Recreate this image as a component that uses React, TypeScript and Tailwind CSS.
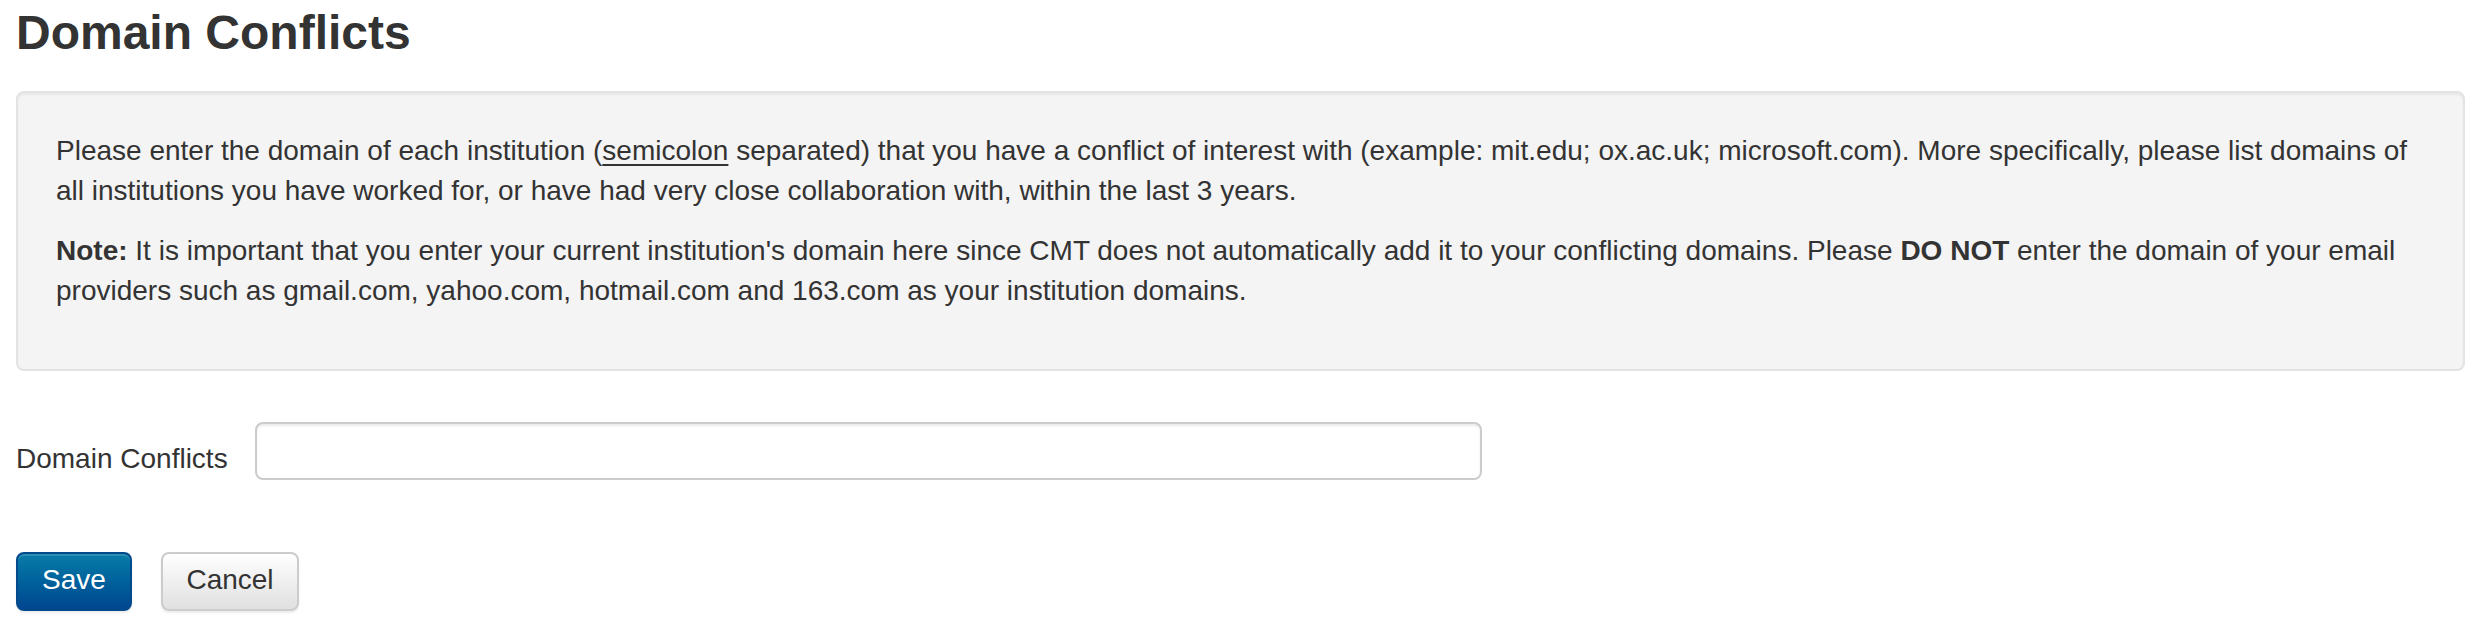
import React from "react";

export default function App() {
  return (
    <div className="min-h-[626px] bg-white pl-4 pr-[10px] font-[family-name:'Liberation_Sans',Arial,Helvetica,sans-serif] text-[#333]">
      <h1 className="pt-[6px] text-[48px] leading-[53px] font-bold text-[#333]">Domain Conflicts</h1>

      <div className="mt-[32px] rounded-[8px] border-2 border-[#e3e3e3] bg-[#f4f4f4] p-[38px] text-[28px] leading-[40px] shadow-[inset_0_2px_2px_rgba(0,0,0,0.05)]">
        <p className="mb-[20px]">
          Please enter the domain of each institution (<span className="underline underline-offset-[4px]">semicolon</span> separated) that you have a conflict of interest with (example: mit.edu; ox.ac.uk; microsoft.com). More specifically, please list domains of all institutions you have worked for, or have had very close collaboration with, within the last 3 years.
        </p>
        <p className="mb-[20px]">
          <strong className="font-bold">Note:</strong> It is important that you enter your current institution's domain here since CMT does not automatically add it to your conflicting domains. Please <strong className="font-bold">DO NOT</strong> enter the domain of your email providers such as gmail.com, yahoo.com, hotmail.com and 163.com as your institution domains.
        </p>
      </div>

      <div className="mt-[51px] flex items-start">
        <label className="w-[239px] pt-[17px] text-[28px] leading-[40px]">Domain Conflicts</label>
        <input
          type="text"
          className="h-[58px] w-[1227px] rounded-[8px] border-2 border-[#cccccc] bg-white px-[24px] text-[28px] shadow-[inset_0_2px_2px_rgba(0,0,0,0.075)] outline-none"
        />
      </div>

      <div className="mt-[72px] flex gap-[29px]">
        <button className="flex h-[59px] w-[116px] items-center justify-center rounded-[8px] border-2 border-[#034a8c] bg-gradient-to-b from-[#0a7ca8] to-[#00468f] pb-[4px] text-[28px] leading-[40px] text-white shadow-[inset_0_2px_0_rgba(255,255,255,0.15),0_2px_2px_rgba(0,0,0,0.075)]">
          Save
        </button>
        <button className="flex h-[59px] w-[138px] items-center justify-center rounded-[8px] border-2 border-[#cccccc] bg-gradient-to-b from-white to-[#e0e0e0] pb-[4px] text-[28px] leading-[40px] text-[#333] shadow-[inset_0_2px_0_rgba(255,255,255,0.15),0_2px_2px_rgba(0,0,0,0.075)]">
          Cancel
        </button>
      </div>
    </div>
  );
}
